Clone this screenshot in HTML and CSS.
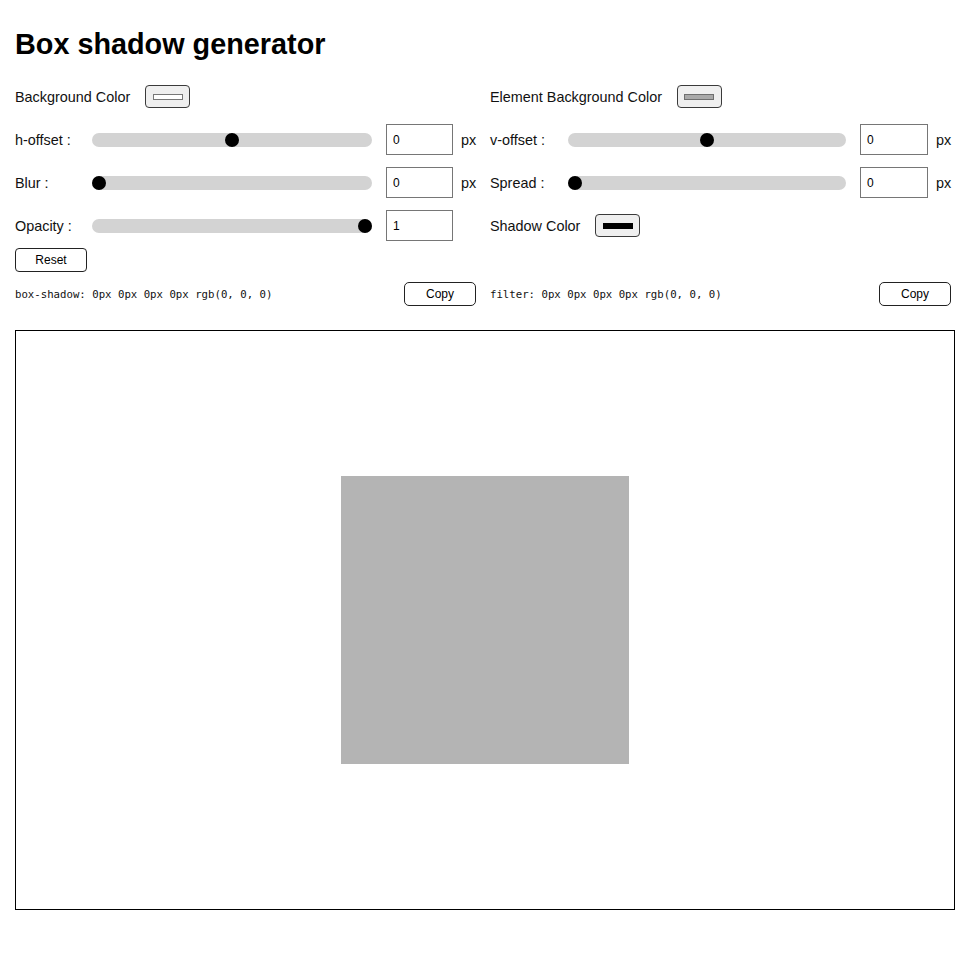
FILE: index.html
```html
<!DOCTYPE html>
<html lang="en">
<head>
<meta charset="utf-8">
<title>Box shadow generator</title>
<link rel="stylesheet" href="styles.css">
</head>
<body>
<div class="page">
  <h1 class="title">Box shadow generator</h1>
  <div class="controls">
    <div class="col">
      <div class="row row-color">
        <span class="label-text">Background Color</span>
        <button class="swatch"><span class="swatch-fill fill-white"></span></button>
      </div>
      <div class="row row-slider">
        <span class="label">h-offset :</span>
        <input class="range" type="range" min="-50" max="50" value="0">
        <input class="num" type="text" value="0">
        <span class="unit">px</span>
      </div>
      <div class="row row-slider">
        <span class="label">Blur :</span>
        <input class="range" type="range" min="0" max="50" value="0">
        <input class="num" type="text" value="0">
        <span class="unit">px</span>
      </div>
      <div class="row row-slider">
        <span class="label">Opacity :</span>
        <input class="range" type="range" min="0" max="1" step="0.01" value="1">
        <input class="num" type="text" value="1">
        <span class="unit"></span>
      </div>
      <div class="row row-reset">
        <button class="btn">Reset</button>
      </div>
      <div class="row row-code">
        <code class="code">box-shadow: 0px 0px 0px 0px rgb(0, 0, 0)</code>
        <button class="btn btn-copy">Copy</button>
      </div>
    </div>
    <div class="col col-right">
      <div class="row row-color">
        <span class="label-text">Element Background Color</span>
        <button class="swatch"><span class="swatch-fill fill-gray"></span></button>
      </div>
      <div class="row row-slider">
        <span class="label">v-offset :</span>
        <input class="range" type="range" min="-50" max="50" value="0">
        <input class="num" type="text" value="0">
        <span class="unit">px</span>
      </div>
      <div class="row row-slider">
        <span class="label">Spread :</span>
        <input class="range" type="range" min="0" max="50" value="0">
        <input class="num" type="text" value="0">
        <span class="unit">px</span>
      </div>
      <div class="row row-slider">
        <span class="label-text">Shadow Color</span>
        <button class="swatch"><span class="swatch-fill fill-black"></span></button>
      </div>
      <div class="row row-reset"></div>
      <div class="row row-code">
        <code class="code">filter: 0px 0px 0px 0px rgb(0, 0, 0)</code>
        <button class="btn btn-copy">Copy</button>
      </div>
    </div>
  </div>
  <div class="preview">
    <div class="box"></div>
  </div>
</div>
</body>
</html>
```
FILE: styles.css
```css
html, body {
  margin: 0;
  padding: 0;
  background: #fff;
}

body {
  font-family: "Liberation Sans", Arial, sans-serif;
  font-size: 14.4px;
  color: #111;
}

.page {
  width: 940px;
  padding: 28px 15px 0;
}

.title {
  margin: 0;
  font-size: 28.8px;
  line-height: 32px;
  font-weight: bold;
  color: #000;
}

.controls {
  margin-top: 25px;
  display: flex;
  gap: 14px;
}

.col {
  width: 461px;
  display: flex;
  flex-direction: column;
}

.row {
  display: flex;
  align-items: center;
}

.row-color {
  height: 23px;
}

.row-slider {
  height: 31px;
  margin-top: 12px;
}

.row-color + .row-slider {
  margin-top: 16px;
}

.row-slider + .row-slider + .row-slider {
  margin-top: 12px;
}

.row-reset {
  height: 24px;
  margin-top: 7px;
}

.row-code {
  height: 24px;
  margin-top: 10px;
  justify-content: space-between;
}

.label {
  width: 77px;
  flex: none;
  white-space: nowrap;
}

.col-right .label {
  width: 78px;
}

.label-text {
  white-space: nowrap;
}

.swatch {
  width: 45px;
  height: 23px;
  margin-left: 15px;
  padding: 0;
  box-sizing: border-box;
  border: 1px solid #3a3a3a;
  border-radius: 4px;
  background: #efefef;
  display: flex;
  align-items: center;
  justify-content: center;
}

.swatch-fill {
  display: block;
  width: 30px;
  height: 6px;
  box-sizing: border-box;
  border: 1px solid #777;
}

.fill-white { background: #fff; }
.fill-gray { background: #a9a9a9; border-color: #6f6f6f; }
.fill-black { background: #000; border-color: #000; }

.range {
  -webkit-appearance: none;
  appearance: none;
  width: 280px;
  flex: 1 1 auto;
  min-width: 0;
  height: 14px;
  margin: 0;
  padding: 0;
  background: #d3d3d3;
  border-radius: 7px;
  outline: none;
}

.range::-webkit-slider-thumb {
  -webkit-appearance: none;
  appearance: none;
  width: 14px;
  height: 14px;
  border-radius: 50%;
  background: #000;
  border: none;
}

.num {
  -webkit-appearance: none;
  appearance: none;
  width: 67px;
  height: 31px;
  flex: none;
  margin: 0 0 0 14px;
  padding: 0 6px;
  box-sizing: border-box;
  border: 1px solid #767676;
  border-radius: 0;
  font-family: "Liberation Sans", Arial, sans-serif;
  font-size: 12px;
  color: #000;
  background: #fff;
}

.col-right .num {
  width: 68px;
}

.unit {
  width: 15px;
  flex: none;
  margin-left: 8px;
}

.btn {
  width: 72px;
  height: 24px;
  padding: 0;
  box-sizing: border-box;
  border: 1px solid #222;
  border-radius: 4px;
  background: #fff;
  font-family: "Liberation Sans", Arial, sans-serif;
  font-size: 12px;
  color: #000;
}

.btn-copy {
  border-radius: 5px;
}

.code {
  font-family: "DejaVu Sans Mono", "Liberation Mono", monospace;
  font-size: 10.7px;
  color: #111;
  white-space: nowrap;
}

.preview {
  margin-top: 24px;
  height: 580px;
  box-sizing: border-box;
  border: 1px solid #000;
  display: flex;
  align-items: center;
  justify-content: center;
}

.box {
  width: 288px;
  height: 288px;
  background: #b4b4b4;
}
```
